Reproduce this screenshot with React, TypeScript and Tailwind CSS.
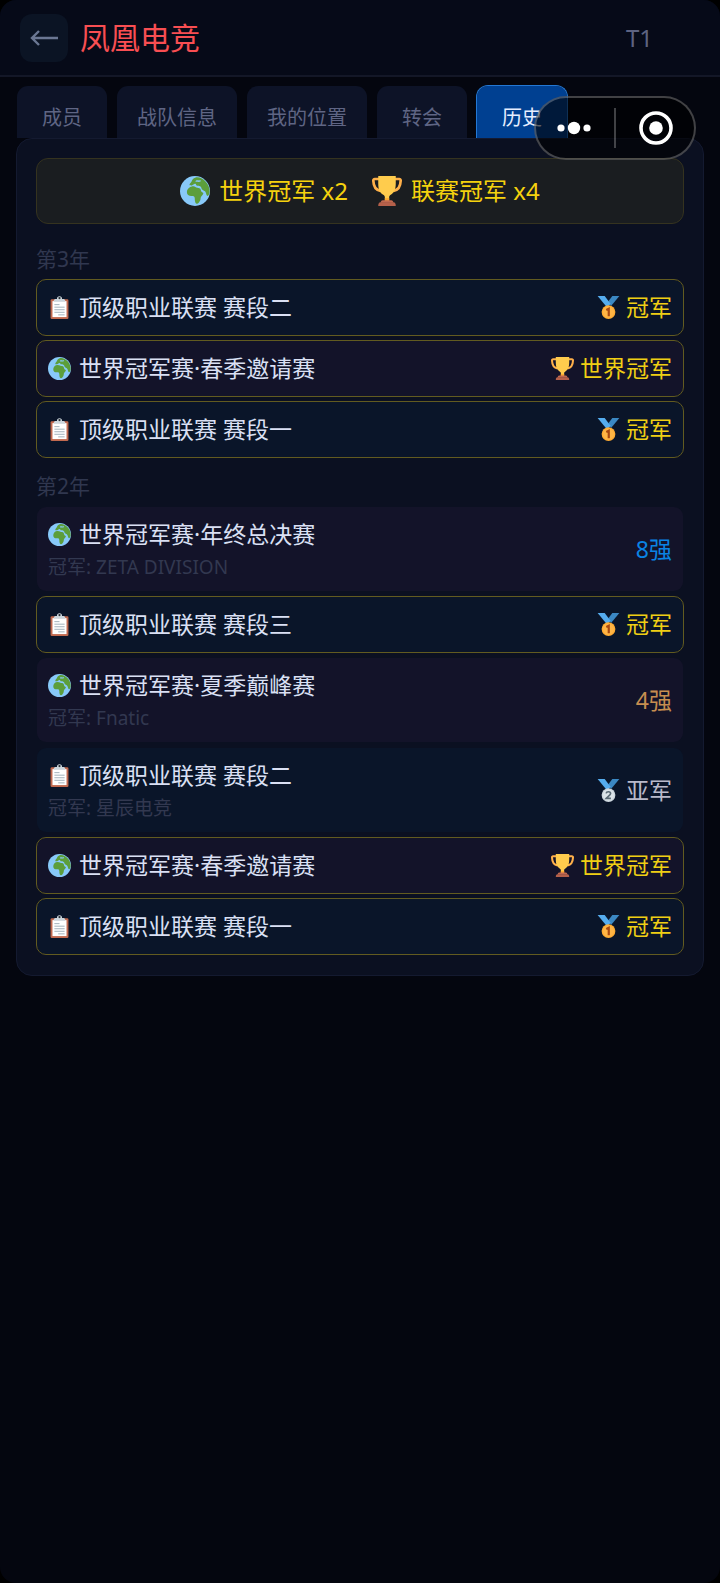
import { useState, type ReactNode } from "react";

type Kind = "league" | "world";
type Result = "champion" | "worldChampion" | "runnerUp" | "top4" | "top8";

interface Entry {
  kind: Kind;
  name: string;
  result: Result;
  winner?: string;
}

const seasons: { year: string; entries: Entry[] }[] = [
  {
    year: "第3年",
    entries: [
      { kind: "league", name: "顶级职业联赛 赛段二", result: "champion" },
      { kind: "world", name: "世界冠军赛·春季邀请赛", result: "worldChampion" },
      { kind: "league", name: "顶级职业联赛 赛段一", result: "champion" },
    ],
  },
  {
    year: "第2年",
    entries: [
      { kind: "world", name: "世界冠军赛·年终总决赛", result: "top8", winner: "ZETA DIVISION" },
      { kind: "league", name: "顶级职业联赛 赛段三", result: "champion" },
      { kind: "world", name: "世界冠军赛·夏季巅峰赛", result: "top4", winner: "Fnatic" },
      { kind: "league", name: "顶级职业联赛 赛段二", result: "runnerUp", winner: "星辰电竞" },
      { kind: "world", name: "世界冠军赛·春季邀请赛", result: "worldChampion" },
      { kind: "league", name: "顶级职业联赛 赛段一", result: "champion" },
    ],
  },
];

const tabs = ["成员", "战队信息", "我的位置", "转会", "历史"];

function Globe({ className }: { className: string }) {
  return (
    <svg viewBox="0 0 36 36" className={className} aria-hidden="true">
      <circle cx="18" cy="18" r="18" fill="#88c9f9" />
      <path
        fill="#5c9e3b"
        d="M8.500 17.500c.7-2.600 3-4.600 5.800-5 2-.3 3.600.6 5.200 1.200 1.700.6 3.600.2 4.800 1.600.8 1 .7 2.500 1.500 3.700.7 1 2.200.8 2.200 1.700 0 1.700-2.300 3-3 4.700-.5 1.500-.1 2.800-1 4.400-.9 1.700-2 3.400-3.600 3.500-1.800.1-2.200-1.800-2.500-3.500-.3-1.800.2-3.300-.7-4.900-.7-1.200-2.100-1-3.600-.9-2.400.1-4.500-.8-5.100-2.900-.3-1.300-.3-2.500 0-3.600z"
      />
      <path
        fill="#5c9e3b"
        d="M11.500 10c.8-2 2.600-3 2.800-4.400.2-1.300 2-3 3.800-3.600C22.500.5 27.300 3.100 30.600 6.500c3.400 3.500 5.200 8 4.900 12.800-.2 2.500-1.500 5-2.700 4.600-1.400-.5-1.300-3.500-2.500-5.200-1-1.400-2.800-1.300-4-2.900-.8-1.100-.4-2.300-1.700-3.300-1.500-1-3.300-.1-4.700-1-1-.7-.3-1.700-1.400-2.100-1.600-.6-2.600 1.600-4.400 1.900-1.200.2-3.200 0-2.600-1.300z"
      />
      <path
        fill="#88c9f9"
        d="M19 5.600c1.700-1.100 3.200.2 5-.4.900-.3 1.500.8.600 1.400-1.500.9-3.400.2-4.800.4-1.200.2-1.700-.8-.8-1.400z"
      />
    </svg>
  );
}

function Trophy({ className }: { className: string }) {
  return (
    <svg viewBox="0 0 36 36" className={className} aria-hidden="true">
      <path
        fill="none"
        stroke="#ffb04a"
        strokeWidth="3.2"
        d="M9 3.600H3.400c-1.300 0-1.900.8-1.800 2.200.2 5 1.600 10.800 8.600 12M27 3.600h5.600c1.300 0 1.900.8 1.800 2.200-.2 5-1.600 10.800-8.600 12"
      />
      <path
        fill="#ffcc4d"
        d="M7.500 0h21v9c0 7.200-2 11.200-6 13.600-1.400.9-1.900 1.700-1.900 3V31h-5.200v-5.400c0-1.300-.5-2.100-1.900-3-4-2.400-6-6.400-6-13.600z"
      />
      <path fill="#ffac33" d="M15.400 26.500h5.200V30h-5.200z" />
      <path fill="#c1694f" d="M13 29h10c1.800 0 2.500 1.200 2.500 3h-15c0-1.800.7-3 2.500-3z" />
      <path fill="#b5604a" d="M10 31.500h16c1.600 0 2.500 1.500 2.500 4.500h-21c0-3 .9-4.500 2.500-4.500z" />
    </svg>
  );
}

function Clipboard({ className }: { className: string }) {
  return (
    <svg viewBox="0 0 36 36" className={className} aria-hidden="true">
      <rect x="4" y="5" width="28" height="31" rx="2" fill="#c1694f" />
      <rect x="7" y="8" width="22" height="25" fill="#fff" />
      <path
        fill="#ccd6dd"
        d="M14 4.500a4 4 0 0 1 8 0h2.500c1.500 0 2.500 1.500 2.500 3.500v1H9V8c0-2 1-3.500 2.500-3.500z"
      />
      <circle cx="18" cy="3.200" r="1.800" fill="#292f33" />
      <path
        stroke="#99aab5"
        strokeWidth="1.4"
        d="M10 13.500h8M10 17.500h16M10 21.500h16M10 25.500h16M16 29.500h10"
      />
    </svg>
  );
}

function Medal({ className, place }: { className: string; place: 1 | 2 }) {
  const first = place === 1;
  return (
    <svg viewBox="0 0 36 36" className={className} aria-hidden="true">
      <path fill="#3b88c3" d="M35 0H24l-6.500 8.500 4.500 7z" />
      <path fill="#55acee" d="M1 0h11l9.500 12.500-6 5z" />
      <circle cx="18" cy="25.200" r="10.800" fill={first ? "#ffac33" : "#ccd6dd"} />
      <circle cx="18" cy="25.200" r="8.600" fill={first ? "#ffb545" : "#dbe3e8"} />
      {first ? (
        <path fill="none" stroke="#a8480f" strokeWidth="3.4" d="M14.500 21.800l3.900-1.800V31.500" />
      ) : (
        <path
          fill="none"
          stroke="#5b6b76"
          strokeWidth="2.6"
          d="M14.300 22.500c.6-3.400 7-3.300 7 .3 0 2.700-4.500 4.500-6.800 7.400h7.300"
        />
      )}
    </svg>
  );
}

const results: Record<Result, { label: string; color: string; icon: ReactNode }> = {
  champion: { label: "冠军", color: "text-[#f0cf14]", icon: <Medal place={1} className="size-[23px]" /> },
  worldChampion: { label: "世界冠军", color: "text-[#f0cf14]", icon: <Trophy className="size-[23px]" /> },
  runnerUp: { label: "亚军", color: "text-[#b9bacb]", icon: <Medal place={2} className="size-[23px]" /> },
  top4: { label: "4强", color: "text-[#c68e50]", icon: null },
  top8: { label: "8强", color: "text-[#0a84e4]", icon: null },
};

function HistoryRow({ entry }: { entry: Entry }) {
  const result = results[entry.result];
  const won = entry.result === "champion" || entry.result === "worldChampion";
  const tone = entry.kind === "world" ? "bg-[#131329]" : "bg-[#0a1529]";
  const edge = won ? "border-[#625b20]" : "border-transparent";
  const Icon = entry.kind === "world" ? Globe : Clipboard;
  return (
    <li
      className={`flex items-center justify-between rounded-[10px] border bg-clip-padding px-[11px] py-[11px] text-[23px] leading-[33px] ${tone} ${edge}`}
    >
      <div>
        <div className="flex items-center gap-2 text-[#dae0f4]">
          <Icon className="size-[23px]" />
          <span>{entry.name}</span>
        </div>
        {entry.winner && (
          <p className="mt-1 text-[19px] leading-[25px] text-[#323850]">冠军: {entry.winner}</p>
        )}
      </div>
      <div className={`flex items-center gap-[6px] ${result.color}`}>
        {result.icon}
        <span>{result.label}</span>
      </div>
    </li>
  );
}

export default function App() {
  const [active, setActive] = useState("历史");
  return (
    <div className="min-h-screen bg-black font-['Noto_Sans','Noto_Sans_CJK_SC',sans-serif]">
      <div className="relative min-h-screen overflow-hidden rounded-2xl bg-[#04060f]">
        <header className="flex items-center gap-3 border-b-2 border-[#131727] bg-[#060a18] pt-[14px] pr-[67px] pb-[13px] pl-5">
          <button
            type="button"
            aria-label="返回"
            className="flex size-12 items-center justify-center rounded-xl bg-[#0b1424] text-[#6b7793]"
          >
            <svg viewBox="0 0 28 16" className="h-4 w-7" fill="none" stroke="currentColor" strokeWidth="2.4" aria-hidden="true">
              <path d="M28 8H2M9 1L2 8l7 7" />
            </svg>
          </button>
          <h1 className="flex-1 text-[30px] leading-9 text-[#f84e52]">凤凰电竞</h1>
          <span className="text-[24px] leading-9 text-[#5d6381]">T1</span>
        </header>

        <nav className="flex gap-2 px-4 pt-2" role="tablist">
          {tabs.map((tab) => (
            <button
              key={tab}
              type="button"
              role="tab"
              aria-selected={tab === active}
              onClick={() => setActive(tab)}
              className={`min-w-[92px] rounded-t-xl border border-b-0 bg-clip-padding px-5 pt-5 pb-2 text-[20px] leading-6 ${
                tab === active
                  ? "border-[#2478d4] bg-[#004091] text-[#e6eeff]"
                  : "border-transparent bg-[#0d1327] text-[#5f6584]"
              }`}
            >
              {tab}
            </button>
          ))}
        </nav>

        <main className="mx-4 rounded-2xl border border-[#141a30] bg-[#0b1021] px-[19px] pt-[19px] pb-5">
          <div className="flex items-center justify-center gap-6 rounded-xl border border-[#35331f] bg-[#1a1d20] py-4 text-[24px] leading-8 text-[#f5d20e]">
            <div className="flex items-center gap-[9px]">
              <Globe className="size-[30px]" />
              <span>世界冠军 x2</span>
            </div>
            <div className="flex items-center gap-[9px]">
              <Trophy className="size-[30px]" />
              <span>联赛冠军 x4</span>
            </div>
          </div>

          <div className="mt-[19px] flex flex-col gap-3">
            {seasons.map((season) => (
              <section key={season.year}>
                <h2 className="mb-1 text-[21px] leading-8 text-[#30374f]">{season.year}</h2>
                <ul className="flex flex-col gap-1">
                  {season.entries.map((entry) => (
                    <HistoryRow key={entry.name} entry={entry} />
                  ))}
                </ul>
              </section>
            ))}
          </div>
        </main>

        <div className="absolute top-24 right-6 flex h-16 w-[162px] items-center gap-[2px] rounded-full border-2 border-white/25 bg-black/60 text-white">
          <button type="button" aria-label="更多" className="flex flex-1 items-center justify-center">
            <svg viewBox="0 0 36 14" className="h-[14px] w-9" fill="currentColor" aria-hidden="true">
              <circle cx="5" cy="7" r="3.600" />
              <circle cx="18" cy="7" r="6.200" />
              <circle cx="31" cy="7" r="3.600" />
            </svg>
          </button>
          <span className="h-10 w-[2px] bg-white/25" />
          <button type="button" aria-label="关闭" className="flex flex-1 items-center justify-center">
            <svg viewBox="0 0 34 34" className="size-[34px]" aria-hidden="true">
              <circle cx="17" cy="17" r="15" fill="none" stroke="currentColor" strokeWidth="3.600" />
              <circle cx="17" cy="17" r="6.800" fill="currentColor" />
            </svg>
          </button>
        </div>
      </div>
    </div>
  );
}
